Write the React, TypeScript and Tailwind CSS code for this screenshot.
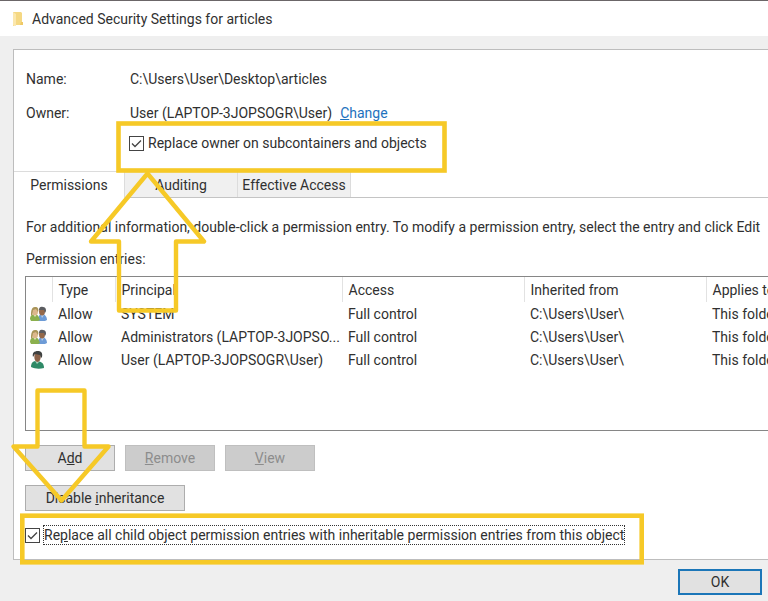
import React, { useState } from 'react';

interface Entry {
  kind: 'group' | 'user';
  type: string;
  principal: string;
  access: string;
  inheritedFrom: string;
  appliesTo: string;
}

const ENTRIES: Entry[] = [
  { kind: 'group', type: 'Allow', principal: 'SYSTEM', access: 'Full control', inheritedFrom: 'C:\\Users\\User\\', appliesTo: 'This folder' },
  { kind: 'group', type: 'Allow', principal: 'Administrators (LAPTOP-3JOPSO...', access: 'Full control', inheritedFrom: 'C:\\Users\\User\\', appliesTo: 'This folder' },
  { kind: 'user', type: 'Allow', principal: 'User (LAPTOP-3JOPSOGR\\User)', access: 'Full control', inheritedFrom: 'C:\\Users\\User\\', appliesTo: 'This folder' },
];

const TABS = ['Permissions', 'Auditing', 'Effective Access'];

const FolderIcon: React.FC = () => (
  <svg width="12" height="16" viewBox="0 0 12 16" aria-hidden="true">
    <path d="M1 1h8l1 1v9h1v3H4l-3 1z" fill="#f5d883" />
    <path d="M1 1l3 2v12l-3-1z" fill="#fbe7ad" />
    <path d="M9 11h2v3H8z" fill="#efc966" />
  </svg>
);

const GroupIcon: React.FC = () => (
  <svg width="18" height="16" viewBox="0 0 18 16" aria-hidden="true">
    <path d="M8 15c0-4 1-7 4-7s5 3 5 6l-2 1z" fill="#6d9bd6" />
    <path d="M0 13c0-3 2-5 5-5 2 0 4 2 5 6l-2 1H1z" fill="#8bb04d" />
    <path d="M3 8l2 3 2-3z" fill="#e9efd8" />
    <path d="M11 9l1 3 2-3z" fill="#b9cfe9" />
    <ellipse cx="12" cy="5.5" rx="3" ry="4" fill="#95694a" />
    <path d="M9 4c0-3 2-4 4-3 2 0 3 1 3 4l-1 2-1-3z" fill="#5b5c60" />
    <ellipse cx="5" cy="5.5" rx="3" ry="4" fill="#dcb78c" />
    <path d="M1 9c0-5 1-8 4-8s4 2 3 5L6 3 3 4 2 10z" fill="#a89458" />
  </svg>
);

const UserIcon: React.FC = () => (
  <svg width="18" height="18" viewBox="0 0 18 18" aria-hidden="true">
    <path d="M1 16c0-4 2-6 5-6 5 0 8 2 8 7-4 1-9 1-13-1z" fill="#2f8a67" />
    <path d="M5 10l2 3 3-3z" fill="#a5cdb9" />
    <ellipse cx="7.5" cy="6" rx="3.2" ry="5" fill="#8a6148" />
    <path d="M3 6c-1-4 1-6 5-6 3 0 5 2 4 6l-1 1-1-3-5-1z" fill="#3f4140" />
  </svg>
);

interface CheckProps {
  id: string;
  defaultChecked?: boolean;
}

const CheckBox: React.FC<CheckProps> = ({ id, defaultChecked }) => (
  <span className="grid h-[15px] w-[15px] shrink-0">
    <input
      id={id}
      type="checkbox"
      defaultChecked={defaultChecked}
      className="peer col-start-1 row-start-1 h-[15px] w-[15px] appearance-none border border-[#444] bg-white outline-none"
    />
    <svg viewBox="0 0 15 15" className="pointer-events-none invisible col-start-1 row-start-1 h-[15px] w-[15px] peer-checked:visible" aria-hidden="true">
      <path d="M3 7.5l3 3 6-6" fill="none" stroke="#444" strokeWidth="1.3" />
    </svg>
  </span>
);

const BUTTON = 'h-[26px] border border-[#adadad] bg-[#e1e1e1] text-center';
const BUTTON_DISABLED = 'h-[26px] border border-[#bfbfbf] bg-[#cccccc] text-center text-[#8c8c8c]';

// Boxes and arrows drawn over the dialog to point at the two check boxes
const Annotations: React.FC = () => (
  <svg className="pointer-events-none absolute left-0 top-0" width="660" height="580" viewBox="0 0 660 580" fill="none" stroke="#f6c927" aria-hidden="true">
    <rect x="118.5" y="123.5" width="326" height="47" strokeWidth="4.6" />
    <rect x="22.3" y="515.7" width="619.4" height="46.6" strokeWidth="4.6" />
    <path d="M147.5 173.5L204 241.5H176V310.5H119V241.5H91z" strokeWidth="4.4" strokeLinejoin="round" />
    <path d="M37.5 390.5H84.5V446.5H108.5L61.5 500.5L13.5 446.5H37.5z" strokeWidth="4.4" strokeLinejoin="round" />
  </svg>
);

const App: React.FC = () => {
  const [tab, setTab] = useState('Permissions');

  return (
    <div className="relative min-h-screen overflow-hidden whitespace-nowrap bg-[#efefef] font-['Roboto','Open_Sans',sans-serif] text-[14px] leading-5 text-[#303030]">
      <header className="flex h-9 items-center gap-2 border-t border-[#6b6668] bg-white pl-3">
        <FolderIcon />
        <h1>Advanced Security Settings for articles</h1>
      </header>

      <main className="ml-[13px] mt-[13px] border-y border-l border-[#bdbdbd] bg-white pb-[14px]">
        <dl className="grid grid-cols-[104px_1fr] gap-y-[14px] pl-3 pt-[19px]">
          <dt>Name:</dt>
          <dd>C:\Users\User\Desktop\articles</dd>
          <dt>Owner:</dt>
          <dd className="flex gap-2">
            User (LAPTOP-3JOPSOGR\User)
            <a href="#change" className="text-[#1e72bd]"><span className="underline">C</span>hange</a>
          </dd>
        </dl>
        <div className="mt-[10px] flex items-center gap-1 pl-[115px]">
          <CheckBox id="replace-owner" defaultChecked />
          <label htmlFor="replace-owner">Replace owner on subcontainers and objects</label>
        </div>

        <div role="tablist" className="mt-[18px] flex border-b border-[#c4c4c4]">
          {TABS.map((name) => (
            <button
              key={name}
              type="button"
              role="tab"
              aria-selected={tab === name}
              onClick={() => setTab(name)}
              className={
                tab === name
                  ? '-mb-px h-[27px] w-[111px] border-r border-t border-[#dcdcdc] bg-white'
                  : 'h-[26px] min-w-[113px] border-r border-t border-[#dcdcdc] bg-[#f0f0f0] px-1'
              }
            >
              {name}
            </button>
          ))}
        </div>

        <section className="pl-[11px] pt-[19px]">
          <p className="pl-px">For additional information, double-click a permission entry. To modify a permission entry, select the entry and click Edit</p>
          <h2 className="mt-3 pl-px">Permission entries:</h2>
          <div className="mt-[7px] h-[155px] border-y border-l border-[#868686]">
            <table className="w-full table-fixed text-left">
              <colgroup>
                <col className="w-[26px]" />
                <col className="w-[63px]" />
                <col className="w-[227px]" />
                <col className="w-[182px]" />
                <col className="w-[182px]" />
                <col />
              </colgroup>
              <thead>
                <tr className="h-[25px]">
                  <th className="border-r border-[#e2e2e2]" aria-label="Kind" />
                  <th className="border-r border-[#e2e2e2] pl-[6px] font-normal">Type</th>
                  <th className="border-r border-[#e2e2e2] pl-[6px] font-normal">Principal</th>
                  <th className="border-r border-[#e2e2e2] pl-[6px] font-normal">Access</th>
                  <th className="border-r border-[#e2e2e2] pl-[6px] font-normal">Inherited from</th>
                  <th className="pl-[6px] font-normal">Applies to</th>
                </tr>
              </thead>
              <tbody>
                {ENTRIES.map((entry) => (
                  <tr key={entry.principal} className="h-[23px]">
                    <td className="pl-1">{entry.kind === 'group' ? <GroupIcon /> : <UserIcon />}</td>
                    <td className="pl-[6px]">{entry.type}</td>
                    <td className="pl-[6px]">{entry.principal}</td>
                    <td className="pl-[6px]">{entry.access}</td>
                    <td className="pl-[6px]">{entry.inheritedFrom}</td>
                    <td className="pl-[6px]">{entry.appliesTo}</td>
                  </tr>
                ))}
              </tbody>
            </table>
          </div>

          <div className="mt-[14px] flex gap-[10px]">
            <button type="button" className={`w-[90px] ${BUTTON}`}>A<span className="underline">d</span>d</button>
            <button type="button" disabled className={`w-[90px] ${BUTTON_DISABLED}`}><span className="underline">R</span>emove</button>
            <button type="button" disabled className={`w-[90px] ${BUTTON_DISABLED}`}><span className="underline">V</span>iew</button>
          </div>
          <button type="button" className={`mt-[14px] block w-[160px] ${BUTTON}`}>
            Disable <span className="underline">i</span>nheritance
          </button>
          <div className="mt-[14px] flex items-center gap-[3px]">
            <CheckBox id="replace-child" defaultChecked />
            <label htmlFor="replace-child" className="border border-dotted border-[#333] leading-[18px]">
              Re<span className="underline">p</span>lace all child object permission entries with inheritable permission entries from this object
            </label>
          </div>
        </section>
      </main>

      <footer className="mt-[9px] flex justify-end pr-[6px]">
        <button type="button" className="h-[26px] w-[84px] border-2 border-[#1b76b8] bg-[#e1e1e1] leading-5">OK</button>
      </footer>

      <Annotations />
    </div>
  );
};

export default App;
